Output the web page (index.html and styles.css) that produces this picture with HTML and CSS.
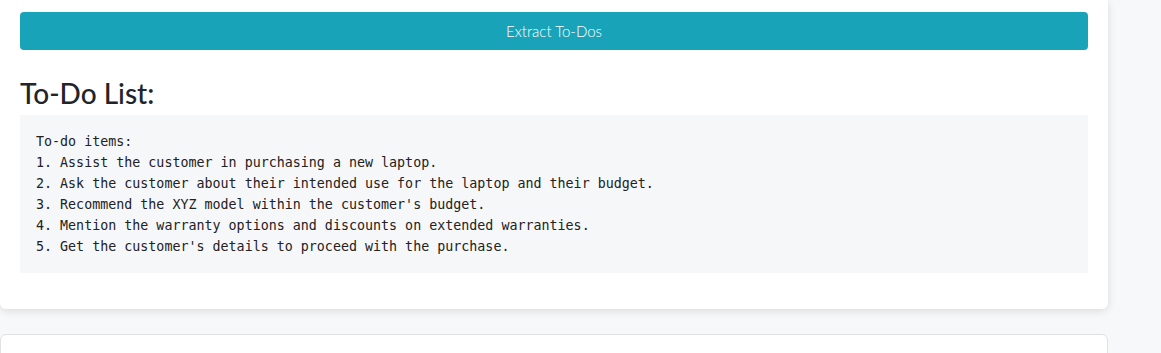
FILE: index.html
```html
<!DOCTYPE html>
<html lang="en">
<head>
  <meta charset="UTF-8">
  <meta name="viewport" content="width=device-width, initial-scale=1.0">
  <title>To-Do Extractor</title>
  <link rel="stylesheet" href="styles.css">
</head>
<body>

<div class="main">
  <div class="card">
    <button class="btn-extract" type="button">Extract To-Dos</button>
    <h2>To-Do List:</h2>
    <pre class="todo-output">To-do items:
1. Assist the customer in purchasing a new laptop.
2. Ask the customer about their intended use for the laptop and their budget.
3. Recommend the XYZ model within the customer's budget.
4. Mention the warranty options and discounts on extended warranties.
5. Get the customer's details to proceed with the purchase.</pre>
  </div>

  <div class="card card-next"></div>
</div>

</body>
</html>
```

FILE: styles.css
```css
body {
  font-family: Lato, "Open Sans", Arial, sans-serif;
  margin: 0;
  padding: 0;
  background-color: #f7f8fa;
  color: #212529;
}

.main {
  width: 1108px;
  display: flex;
  flex-direction: column;
  gap: 25px;
}

.card {
  background-color: #fff;
  padding: 12px 20px 20px;
  border-radius: 0 0 6px 6px;
  box-shadow: 0 2px 8px rgba(0, 0, 0, 0.12);
}

.card-next {
  border: 1px solid #dfe1e5;
  border-radius: 6px;
  box-shadow: none;
  min-height: 60px;
}

.btn-extract {
  display: block;
  width: 100%;
  height: 38px;
  padding: 0 12px;
  background-color: #19a3b9;
  color: #fff;
  border: none;
  border-radius: 4px;
  font-family: Lato, Arial, sans-serif;
  font-size: 15px;
  font-weight: 300;
  cursor: pointer;
}

h2 {
  margin: 23px 0 0;
  font-size: 28px;
  font-weight: 500;
  line-height: 40px;
  color: #212529;
}

.todo-output {
  margin: 2px 0 16px;
  padding: 16px;
  background-color: #f6f7f9;
  font-family: "DejaVu Sans Mono", "Liberation Mono", monospace;
  font-size: 13.33px;
  line-height: 21px;
  color: #222;
  white-space: pre;
}
```
